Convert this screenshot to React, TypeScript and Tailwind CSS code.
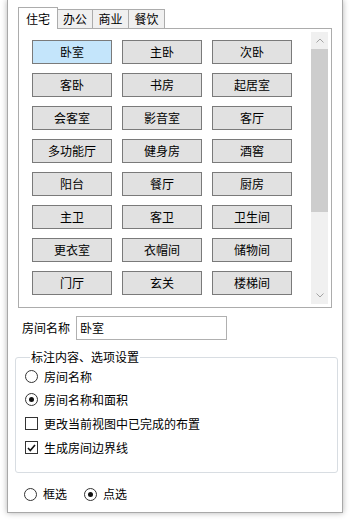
import React from "react";

const rooms = [
  "卧室", "主卧", "次卧",
  "客卧", "书房", "起居室",
  "会客室", "影音室", "客厅",
  "多功能厅", "健身房", "酒窖",
  "阳台", "餐厅", "厨房",
  "主卫", "客卫", "卫生间",
  "更衣室", "衣帽间", "储物间",
  "门厅", "玄关", "楼梯间",
];

function Radio({ checked }: { checked?: boolean }) {
  return (
    <span className="w-[13px] h-[13px] rounded-full border border-[#333333] bg-white flex items-center justify-center shrink-0">
      {checked && <span className="w-[5px] h-[5px] rounded-full bg-[#111111]" />}
    </span>
  );
}

function Check({ checked }: { checked?: boolean }) {
  return (
    <span className="w-[13px] h-[13px] border border-[#333333] bg-white flex items-center justify-center shrink-0">
      {checked && (
        <svg width="9" height="8" viewBox="0 0 9 8">
          <path d="M1 4 L3.3 6.5 L8 1" fill="none" stroke="#111" strokeWidth="1.6" />
        </svg>
      )}
    </span>
  );
}

function Chevron({ up }: { up?: boolean }) {
  return (
    <svg width="8" height="5" viewBox="0 0 8 5">
      <path
        d={up ? "M0.5 4.5 L4 1 L7.5 4.5" : "M0.5 0.5 L4 4 L7.5 0.5"}
        fill="none"
        stroke="#a3a3a3"
        strokeWidth="1"
      />
    </svg>
  );
}

export default function App() {
  return (
    <div className="w-[350px] h-[521px] bg-white overflow-hidden text-[12px] leading-[16px] text-black font-['Microsoft_YaHei','Noto_Sans_CJK_SC','Noto_Sans',sans-serif]">
      <div className="ml-[7px] w-[336px] h-[513px] border-x border-b border-[#a8a8a8] bg-white shadow-[0_0_6px_rgba(0,0,0,0.3)] flex flex-col">
        {/* Tabs */}
        <div className="mt-[7px] ml-[10px] flex items-end h-[21px]">
          <div className="relative z-10 -mb-px h-[22px] w-[40px] border border-b-0 border-[#acacac] bg-white flex items-center justify-center">
            住宅
          </div>
          <div className="-ml-px h-[19px] w-[36px] border border-b-0 border-[#acacac] bg-[#f0f0f0] flex items-center justify-center">
            办公
          </div>
          <div className="-ml-px h-[19px] w-[37px] border border-b-0 border-[#acacac] bg-[#f0f0f0] flex items-center justify-center">
            商业
          </div>
          <div className="-ml-px h-[19px] w-[37px] border border-b-0 border-[#acacac] bg-[#f0f0f0] flex items-center justify-center">
            餐饮
          </div>
        </div>

        {/* Tab panel */}
        <div className="ml-[10px] w-[314px] h-[280px] border border-[#acacac] bg-white p-[3px] flex">
          <div className="flex-1 overflow-hidden pt-[8px] pl-[10px]">
            <div className="grid grid-cols-[80px_80px_80px] gap-x-[10px] gap-y-[9px]">
              {rooms.map((r, i) => (
                <div
                  key={r}
                  className={
                    i === 0
                      ? "h-[24px] border border-[#7a7a7a] bg-[#c4e5fb] flex items-center justify-center"
                      : "h-[24px] border border-[#7a7a7a] bg-[#e1e1e1] flex items-center justify-center"
                  }
                >
                  {r}
                </div>
              ))}
            </div>
          </div>
          <div className="w-[17px] h-full bg-[#f0f0f0] flex flex-col">
            <div className="h-[17px] flex items-center justify-center">
              <Chevron up />
            </div>
            <div className="h-[163px] bg-[#cdcdcd]" />
            <div className="flex-1" />
            <div className="h-[17px] flex items-center justify-center">
              <Chevron />
            </div>
          </div>
        </div>

        {/* Room name */}
        <div className="mt-[8px] ml-[14px] flex items-center">
          <span className="w-[54px]">房间名称</span>
          <div className="w-[151px] h-[24px] border border-[#b0b0b0] bg-white pl-[3px] flex items-center">
            卧室
          </div>
        </div>

        {/* Group box */}
        <fieldset className="mt-[9px] ml-[7px] mr-[4px] border border-[#d8dde2] rounded-[3px] pl-[9px] pb-[13px]">
          <legend className="ml-[5px] px-[1px] leading-[16px]">标注内容、选项设置</legend>
          <div className="flex flex-col">
            <label className="h-[23px] flex items-center gap-[6px]">
              <Radio />
              <span>房间名称</span>
            </label>
            <label className="h-[23px] flex items-center gap-[6px]">
              <Radio checked />
              <span>房间名称和面积</span>
            </label>
            <label className="mt-[1px] h-[23px] flex items-center gap-[6px]">
              <Check />
              <span>更改当前视图中已完成的布置</span>
            </label>
            <label className="mt-[1px] h-[23px] flex items-center gap-[6px]">
              <Check checked />
              <span>生成房间边界线</span>
            </label>
          </div>
        </fieldset>

        {/* Selection mode */}
        <div className="mt-[9px] ml-[16px] h-[24px] flex items-center gap-[17px]">
          <label className="flex items-center gap-[6px]">
            <Radio />
            <span>框选</span>
          </label>
          <label className="flex items-center gap-[6px]">
            <Radio checked />
            <span>点选</span>
          </label>
        </div>
      </div>
    </div>
  );
}
